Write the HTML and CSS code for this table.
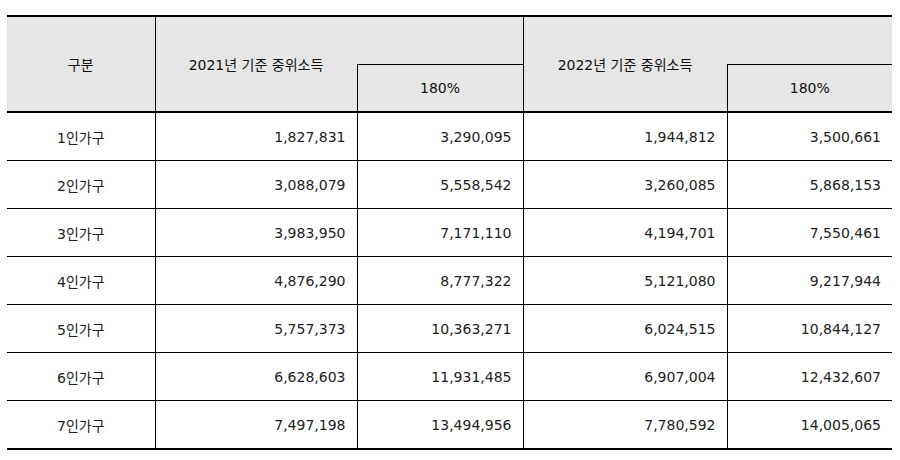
FILE: index.html
```html
<!DOCTYPE html>
<html lang="ko">
<head>
<meta charset="utf-8">
<link rel="stylesheet" href="styles.css">
</head>
<body>
<table class="income">
  <colgroup>
    <col class="c1"><col class="c2"><col class="c3"><col class="c4"><col class="c5">
  </colgroup>
  <thead>
    <tr class="h1">
      <th class="gubun" rowspan="2">구분</th>
      <th class="year" rowspan="2">2021년 기준 중위소득</th>
      <th class="blank"></th>
      <th class="year year2" rowspan="2">2022년 기준 중위소득</th>
      <th class="blank"></th>
    </tr>
    <tr class="h2">
      <th class="pct">180%</th>
      <th class="pct">180%</th>
    </tr>
  </thead>
  <tbody>
    <tr><td>1인가구</td><td>1,827,831</td><td>3,290,095</td><td>1,944,812</td><td>3,500,661</td></tr>
    <tr><td>2인가구</td><td>3,088,079</td><td>5,558,542</td><td>3,260,085</td><td>5,868,153</td></tr>
    <tr><td>3인가구</td><td>3,983,950</td><td>7,171,110</td><td>4,194,701</td><td>7,550,461</td></tr>
    <tr><td>4인가구</td><td>4,876,290</td><td>8,777,322</td><td>5,121,080</td><td>9,217,944</td></tr>
    <tr><td>5인가구</td><td>5,757,373</td><td>10,363,271</td><td>6,024,515</td><td>10,844,127</td></tr>
    <tr><td>6인가구</td><td>6,628,603</td><td>11,931,485</td><td>6,907,004</td><td>12,432,607</td></tr>
    <tr><td>7인가구</td><td>7,497,198</td><td>13,494,956</td><td>7,780,592</td><td>14,005,065</td></tr>
  </tbody>
</table>
</body>
</html>
```
FILE: styles.css
```css
html, body {
  margin: 0;
  padding: 0;
  background: #fff;
}
body {
  padding: 15px 0 0 7px;
  font-family: "DejaVu Sans", "Noto Sans CJK KR", sans-serif;
  font-size: 14px;
  color: #222;
}
.income {
  border-collapse: collapse;
  width: 885px;
  table-layout: fixed;
  border-top: 2px solid #000;
  border-bottom: 2px solid #000;
}
.c1 { width: 148px; }
.c2 { width: 202px; }
.c3 { width: 166px; }
.c4 { width: 204px; }
.c5 { width: 165px; }
.income th {
  background: #e6e6e6;
  font-weight: normal;
  padding: 0;
  border: none;
  text-align: center;
  color: #111;
}
.income .h1 { height: 48px; }
.income .h2 { height: 48px; }
.income .gubun { border-right: 1px solid #000; }
.income .year2 { border-left: 1px solid #000; }
.income .pct {
  border-top: 1px solid #000;
  border-left: 1px solid #000;
  border-bottom: 2px solid #000;
}
.income .gubun, .income .year { border-bottom: 2px solid #000; }
.income td {
  height: 47px;
  padding: 0 11px 0 0;
  text-align: right;
  border-top: 1px solid #000;
  border-left: 1px solid #000;
}
.income td:first-child {
  text-align: center;
  padding: 0;
  border-left: none;
}
.income tbody tr:first-child td { border-top: 2px solid #000; }
```
